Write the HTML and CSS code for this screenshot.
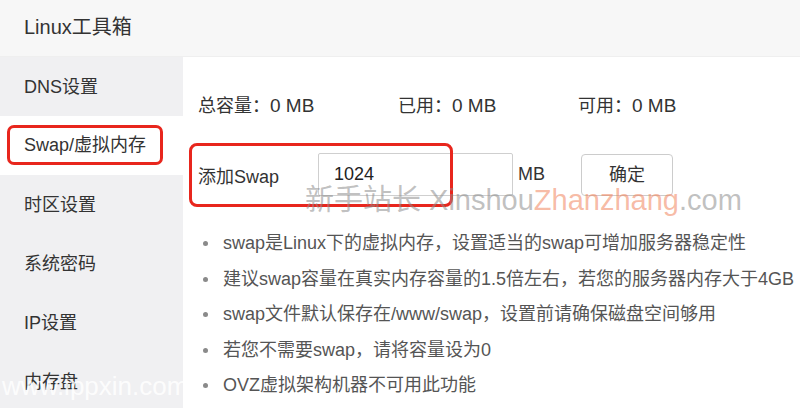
FILE: index.html
```html
<!DOCTYPE html>
<html lang="zh">
<head>
<meta charset="utf-8">
<link rel="stylesheet" href="styles.css">
</head>
<body>
<div class="page">
  <div class="header">Linux工具箱</div>
  <div class="body">
    <div class="sidebar">
      <div class="nav-item">DNS设置</div>
      <div class="nav-item active"><span class="hl">Swap/虚拟内存</span></div>
      <div class="nav-item">时区设置</div>
      <div class="nav-item">系统密码</div>
      <div class="nav-item">IP设置</div>
      <div class="nav-item">内存盘</div>
    </div>
    <div class="main">
      <div class="stats">
        <div class="stat s1">总容量：<span class="val">0 MB</span></div>
        <div class="stat s2">已用：<span class="val">0 MB</span></div>
        <div class="stat">可用：<span class="val">0 MB</span></div>
      </div>
      <div class="form-row">
        <div class="label">添加Swap</div>
        <div class="input">1024</div>
        <div class="unit">MB</div>
        <div class="btn">确定</div>
      </div>
      <ul class="tips">
        <li>swap是Linux下的虚拟内存，设置适当的swap可增加服务器稳定性</li>
        <li>建议swap容量在真实内存容量的1.5倍左右，若您的服务器内存大于4GB</li>
        <li>swap文件默认保存在/www/swap，设置前请确保磁盘空间够用</li>
        <li>若您不需要swap，请将容量设为0</li>
        <li>OVZ虚拟架构机器不可用此功能</li>
      </ul>
      <div class="form-mark"></div>
    </div>
  </div>
  <div class="wm-main">新手站长 Xinshou<span class="wm-orange">Zhanzhang</span>.com</div>
  <div class="wm-side">www.ippxin.com</div>
</div>
</body>
</html>
```

FILE: styles.css
```css
* { box-sizing: border-box; }
html, body {
  margin: 0;
  padding: 0;
  background: #ffffff;
}
body {
  font-family: "Liberation Sans", "Noto Sans CJK SC", sans-serif;
  color: #333;
}
.page {
  position: relative;
  width: 800px;
  height: 408px;
  overflow: hidden;
}
.header {
  height: 57px;
  line-height: 55px;
  padding-left: 24px;
  font-size: 20px;
  background: #f7f7f7;
  border-bottom: 1px solid #efefef;
  color: #333;
}
.body {
  display: flex;
  height: 351px;
}
.sidebar {
  width: 183px;
  flex: none;
  background: #f0f0f2;
}
.nav-item {
  height: 59px;
  line-height: 61px;
  padding-left: 24px;
  font-size: 18px;
  color: #333;
}
.nav-item.active {
  background: #ffffff;
  padding-left: 7px;
  padding-top: 9px;
}
.hl {
  display: inline-block;
  height: 40px;
  line-height: 35px;
  padding: 0 14px;
  border: 3px solid #e8261d;
  border-radius: 7px;
  vertical-align: top;
}
.main {
  position: relative;
  flex: 1;
  padding: 37px 0 0 15px;
  background: #fff;
}
.stats {
  display: flex;
  font-size: 18px;
  line-height: 24px;
  color: #333;
}
.stat .val { font-size: 19px; }
.stat.s1 { width: 200px; }
.stat.s2 { width: 180px; }
.form-row {
  display: flex;
  align-items: center;
  margin-top: 35px;
  height: 43px;
  font-size: 18px;
}
.label {
  width: 120px;
}
.input {
  width: 195px;
  height: 43px;
  line-height: 41px;
  padding-left: 15px;
  border: 1px solid #cfcfcf;
  border-radius: 2px;
  font-size: 18px;
  color: #222;
}
.unit {
  margin-left: 5px;
  width: 63px;
}
.btn {
  width: 92px;
  height: 42px;
  line-height: 40px;
  text-align: center;
  border: 1px solid #cccccc;
  border-radius: 4px;
  background: #fff;
  font-size: 18px;
}
.tips {
  list-style: none;
  margin: 29px 0 0 0;
  padding: 0 0 0 25px;
  font-size: 18px;
  color: #555;
}
.tips li {
  position: relative;
  height: 35.6px;
  line-height: 36px;
  white-space: nowrap;
}
.tips li::before {
  content: "";
  position: absolute;
  left: -20px;
  top: 16px;
  width: 5px;
  height: 5px;
  border-radius: 50%;
  background: #8a8a8a;
}
.form-mark {
  position: absolute;
  left: 6px;
  top: 86px;
  width: 264px;
  height: 64px;
  border: 3px solid #e8261d;
  border-radius: 8px;
}
.wm-main {
  position: absolute;
  left: 305px;
  top: 182px;
  font-size: 29px;
  line-height: 36px;
  color: rgba(140, 140, 140, 0.55);
  white-space: nowrap;
}
.wm-orange {
  color: rgba(240, 130, 90, 0.55);
}
.wm-side {
  position: absolute;
  left: 2px;
  top: 370px;
  font-size: 26px;
  line-height: 32px;
  color: rgba(255, 255, 255, 0.85);
  white-space: nowrap;
}
```
